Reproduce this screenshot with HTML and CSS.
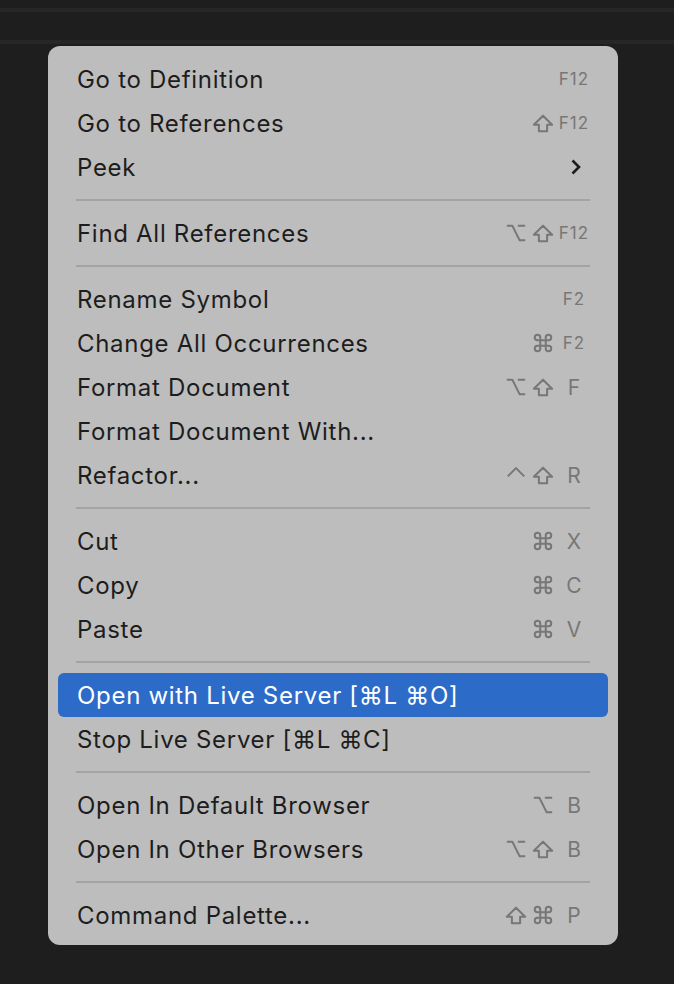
FILE: index.html
```html
<html>
  <head>
    <title>Context Menu</title>
    <link rel="stylesheet" href="styles.css">
  </head>
  <body>
    <div class="editor-top">
      <div class="band"></div>
      <div class="band"></div>
    </div>

    <div class="menu">
      <div class="item"><span class="label">Go to Definition</span><span class="keys"><span class="mods"></span><span class="key small">F12</span></span></div>
      <div class="item"><span class="label">Go to References</span><span class="keys"><span class="mods"><svg class="mod" viewBox="0 0 24 24"><path d="M12 4 22 14H16.5v7h-9v-7H2z"/></svg></span><span class="key small">F12</span></span></div>
      <div class="item"><span class="label">Peek</span><svg class="chevron" viewBox="0 0 12 18"><path d="M2.5 2.5 9 9l-6.5 6.5"/></svg></div>
      <div class="sep"></div>
      <div class="item"><span class="label">Find All References</span><span class="keys"><span class="mods"><svg class="mod" viewBox="0 0 24 24"><path d="M2 4h6l8 16h6M14 4h8"/></svg><svg class="mod" viewBox="0 0 24 24"><path d="M12 4 22 14H16.5v7h-9v-7H2z"/></svg></span><span class="key small">F12</span></span></div>
      <div class="sep"></div>
      <div class="item"><span class="label">Rename Symbol</span><span class="keys"><span class="mods"></span><span class="key small">F2</span></span></div>
      <div class="item"><span class="label">Change All Occurrences</span><span class="keys"><span class="mods"><svg class="mod" viewBox="0 0 24 24"><path d="M15 6v12a3 3 0 1 0 3-3H6a3 3 0 1 0 3 3V6a3 3 0 1 0-3 3h12a3 3 0 1 0-3-3"/></svg></span><span class="key small">F2</span></span></div>
      <div class="item"><span class="label">Format Document</span><span class="keys"><span class="mods"><svg class="mod" viewBox="0 0 24 24"><path d="M2 4h6l8 16h6M14 4h8"/></svg><svg class="mod" viewBox="0 0 24 24"><path d="M12 4 22 14H16.5v7h-9v-7H2z"/></svg></span><span class="key">F</span></span></div>
      <div class="item"><span class="label">Format Document With...</span></div>
      <div class="item"><span class="label">Refactor...</span><span class="keys"><span class="mods"><svg class="mod" viewBox="0 0 24 24"><path d="M3 13.5l9-9 9 9"/></svg><svg class="mod" viewBox="0 0 24 24"><path d="M12 4 22 14H16.5v7h-9v-7H2z"/></svg></span><span class="key">R</span></span></div>
      <div class="sep"></div>
      <div class="item"><span class="label">Cut</span><span class="keys"><span class="mods"><svg class="mod" viewBox="0 0 24 24"><path d="M15 6v12a3 3 0 1 0 3-3H6a3 3 0 1 0 3 3V6a3 3 0 1 0-3 3h12a3 3 0 1 0-3-3"/></svg></span><span class="key">X</span></span></div>
      <div class="item"><span class="label">Copy</span><span class="keys"><span class="mods"><svg class="mod" viewBox="0 0 24 24"><path d="M15 6v12a3 3 0 1 0 3-3H6a3 3 0 1 0 3 3V6a3 3 0 1 0-3 3h12a3 3 0 1 0-3-3"/></svg></span><span class="key">C</span></span></div>
      <div class="item"><span class="label">Paste</span><span class="keys"><span class="mods"><svg class="mod" viewBox="0 0 24 24"><path d="M15 6v12a3 3 0 1 0 3-3H6a3 3 0 1 0 3 3V6a3 3 0 1 0-3 3h12a3 3 0 1 0-3-3"/></svg></span><span class="key">V</span></span></div>
      <div class="sep"></div>
      <div class="item active"><span class="label">Open with Live Server [⌘L ⌘O]</span></div>
      <div class="item"><span class="label">Stop Live Server [⌘L ⌘C]</span></div>
      <div class="sep"></div>
      <div class="item"><span class="label">Open In Default Browser</span><span class="keys"><span class="mods"><svg class="mod" viewBox="0 0 24 24"><path d="M2 4h6l8 16h6M14 4h8"/></svg></span><span class="key">B</span></span></div>
      <div class="item"><span class="label">Open In Other Browsers</span><span class="keys"><span class="mods"><svg class="mod" viewBox="0 0 24 24"><path d="M2 4h6l8 16h6M14 4h8"/></svg><svg class="mod" viewBox="0 0 24 24"><path d="M12 4 22 14H16.5v7h-9v-7H2z"/></svg></span><span class="key">B</span></span></div>
      <div class="sep"></div>
      <div class="item"><span class="label">Command Palette...</span><span class="keys"><span class="mods"><svg class="mod" viewBox="0 0 24 24"><path d="M12 4 22 14H16.5v7h-9v-7H2z"/></svg><svg class="mod" viewBox="0 0 24 24"><path d="M15 6v12a3 3 0 1 0 3-3H6a3 3 0 1 0 3 3V6a3 3 0 1 0-3 3h12a3 3 0 1 0-3-3"/></svg></span><span class="key">P</span></span></div>
    </div>
  </body>
</html>
```

FILE: styles.css
```css
body {
    margin: 0;
    padding: 0;
    background-color: #1e1e1e;
    font-family: Inter, "DejaVu Sans", sans-serif;
    overflow: hidden;
}

.editor-top {
    height: 46px;
    padding-top: 8px;
    box-sizing: border-box;
}

.band {
    height: 4px;
    background-color: #262626;
    margin-bottom: 28px;
}

.menu {
    margin-left: 48px;
    width: 570px;
    height: 899px;
    box-sizing: border-box;
    padding: 11px 10px 9px 10px;
    background-color: #bdbdbd;
    border-radius: 12px;
}

.item {
    height: 44px;
    display: flex;
    align-items: center;
    justify-content: space-between;
    padding: 0 18px 0 19px;
    border-radius: 6px;
    color: #1d1d1d;
    font-size: 24px;
    letter-spacing: 0.7px;
}

.item.active {
    background-color: #2d6bc9;
    color: #ffffff;
}

.sep {
    height: 2px;
    margin: 10px 18px;
    background-color: #a3a3a3;
}

.keys {
    display: flex;
    align-items: center;
    color: #777777;
    letter-spacing: 0;
}

.mods {
    display: flex;
    gap: 5px;
}

.mod {
    width: 22px;
    height: 22px;
    fill: none;
    stroke: #777777;
    stroke-width: 2.2;
    stroke-linejoin: round;
}

.key {
    width: 32px;
    margin-left: 4px;
    text-align: center;
    font-size: 21px;
}

.key.small {
    font-size: 17px;
    letter-spacing: 1px;
}

.chevron {
    width: 12px;
    height: 18px;
    margin-right: 8px;
    fill: none;
    stroke: #1d1d1d;
    stroke-width: 2.6;
}
```
